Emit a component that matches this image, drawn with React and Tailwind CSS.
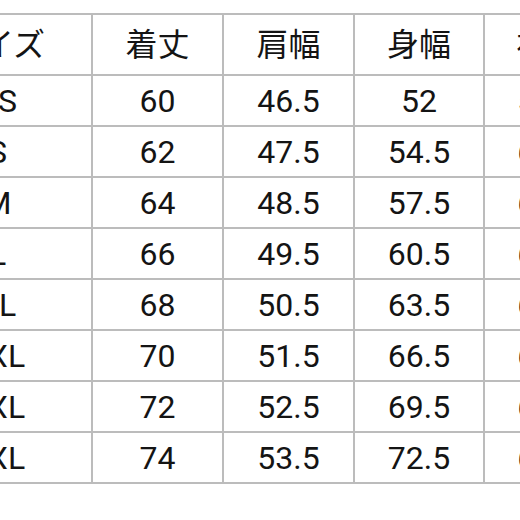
const headers = ["サイズ", "着丈", "肩幅", "身幅", "袖丈"];

const rows = [
  ["XS", "60", "46.5", "52", "58.5"],
  ["S", "62", "47.5", "54.5", "60.5"],
  ["M", "64", "48.5", "57.5", "61.5"],
  ["L", "66", "49.5", "60.5", "62.5"],
  ["XL", "68", "50.5", "63.5", "63.5"],
  ["2XL", "70", "51.5", "66.5", "64.5"],
  ["3XL", "72", "52.5", "69.5", "65.5"],
  ["4XL", "74", "53.5", "72.5", "66.5"],
];

export default function App() {
  return (
    <div className="w-[520px] h-[520px] overflow-hidden bg-white pt-[13px]">
      <table
        className="ml-[-98px] w-[710px] min-w-[710px] border-collapse text-[#141414] text-[32px] table-fixed"
        style={{ fontFamily: "Roboto, 'Noto Sans CJK JP', sans-serif" }}
      >
        <colgroup>
          <col className="w-[189px]" />
          <col className="w-[131px]" />
          <col className="w-[131px]" />
          <col className="w-[130px]" />
          <col className="w-[129px]" />
        </colgroup>
        <thead>
          <tr className="h-[61px]">
            {headers.map((h) => (
              <th
                key={h}
                className="border-2 border-[#bcbcbc] text-center font-normal leading-none"
              >
                {h}
              </th>
            ))}
          </tr>
        </thead>
        <tbody>
          {rows.map((r) => (
            <tr key={r[0]} className="h-[51px]">
              {r.map((c, i) => (
                <td
                  key={i}
                  className="border-2 border-[#bcbcbc] text-center leading-none"
                >
                  {c}
                </td>
              ))}
            </tr>
          ))}
        </tbody>
      </table>
    </div>
  );
}
